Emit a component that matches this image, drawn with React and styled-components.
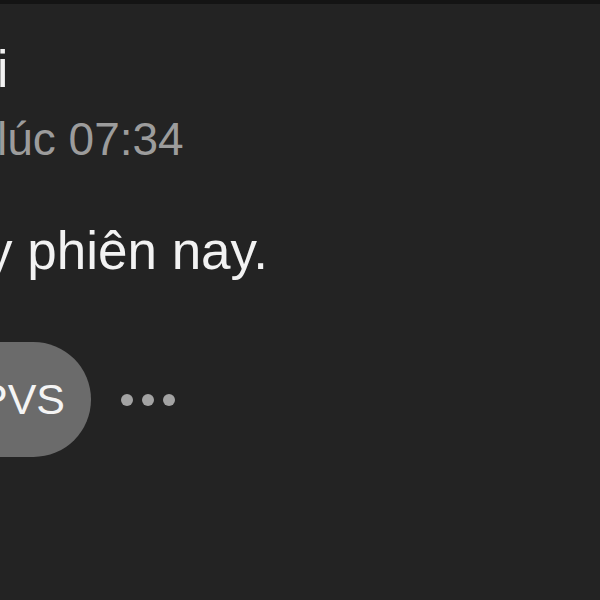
import React from 'react';
import styled, { createGlobalStyle } from 'styled-components';

const GlobalStyle = createGlobalStyle`
  html, body {
    margin: 0;
    padding: 0;
    background: #232323;
    overflow: hidden;
  }
  body {
    font-family: "Liberation Sans", Arial, sans-serif;
  }
`;

const Screen = styled.div`
  width: 600px;
  height: 600px;
  background: #232323;
  overflow: hidden;
  display: flex;
  flex-direction: column;
`;

const TopBar = styled.div`
  height: 4px;
  background: #141414;
  flex-shrink: 0;
`;

const Message = styled.section`
  display: flex;
  flex-direction: column;
  padding-top: 36px;
`;

const Line = styled.div`
  white-space: nowrap;
  margin-left: ${(p) => p.$shift}px;
  font-size: ${(p) => p.$size}px;
  line-height: ${(p) => p.$lh}px;
  color: ${(p) => p.$color || '#f2f2f2'};
  margin-top: ${(p) => p.$gap || 0}px;
`;

const Actions = styled.div`
  display: flex;
  align-items: center;
  gap: 30px;
  margin-top: 61px;
  margin-left: -61px;
`;

const Pill = styled.button`
  height: 115px;
  padding: 0 26px 0 40px;
  border: none;
  border-radius: 58px;
  background: #6b6b6b;
  color: #f4f4f4;
  font-family: "Liberation Sans", Arial, sans-serif;
  font-size: 43px;
  display: flex;
  align-items: center;
`;

const More = styled.div`
  display: flex;
  gap: 9px;
`;

const Dot = styled.span`
  width: 12px;
  height: 12px;
  border-radius: 50%;
  background: #a3a3a3;
`;

export default function App() {
  return (
    <>
      <GlobalStyle />
      <Screen>
        <TopBar />
        <Message>
          <Line $shift={-3} $size={51} $lh={60}>i</Line>
          <Line $shift={-3} $size={46} $lh={54} $gap={12} $color="#9c9c9c">
            lúc 07:34
          </Line>
          <Line $shift={-14} $size={53} $lh={60} $gap={55}>
            y phiên nay.
          </Line>
        </Message>
        <Actions>
          <Pill>PVS</Pill>
          <More>
            <Dot />
            <Dot />
            <Dot />
          </More>
        </Actions>
      </Screen>
    </>
  );
}
